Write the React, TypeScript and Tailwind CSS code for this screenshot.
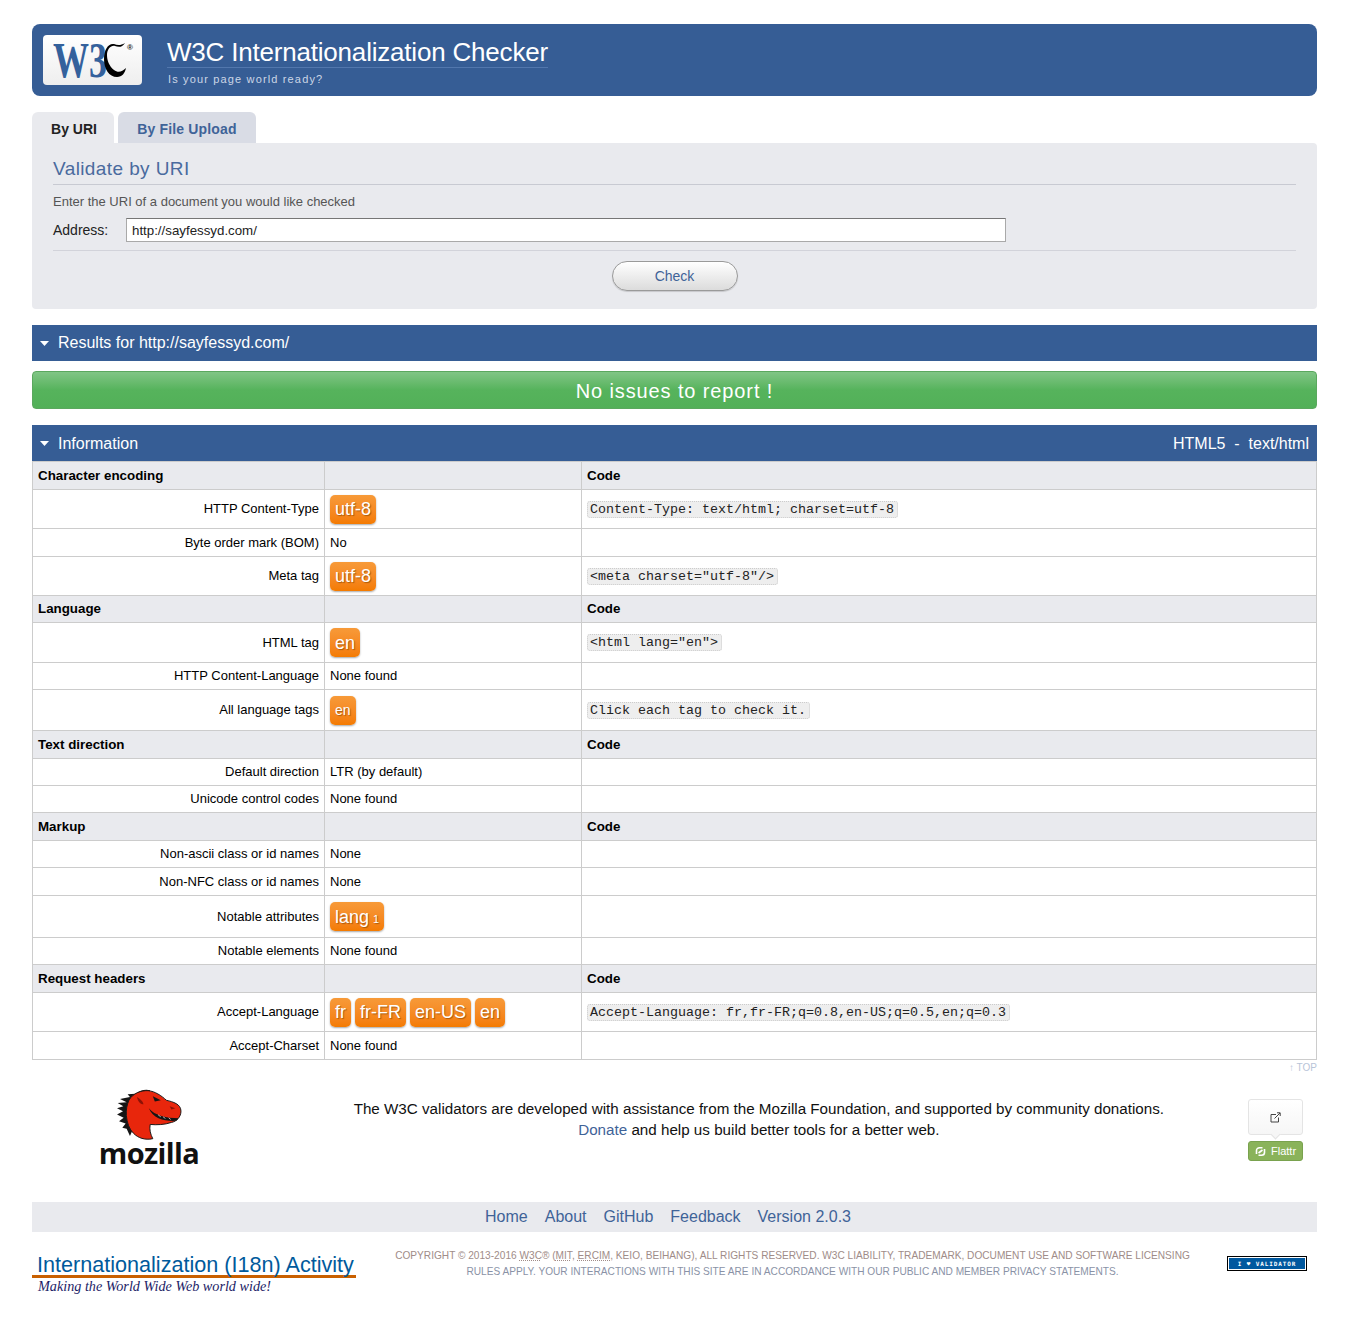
import React from "react";

const Caret = () => (
  <svg width="9" height="5" viewBox="0 0 9 5" className="mr-[9px] shrink-0"><polygon points="0,0 9,0 4.5,5" fill="#fff" /></svg>
);

const Pill = ({ children, size = "lg" }: { children: React.ReactNode; size?: "lg" | "sm" }) => (
  <span
    className={
      "inline-flex items-center justify-center rounded-[5px] bg-gradient-to-b from-[#f79a38] to-[#f47b00] pt-px text-white shadow-[0_1px_2px_rgba(0,0,0,0.35)] [text-shadow:1px_1px_1px_rgba(120,60,0,0.6)] " +
      (size === "lg" ? "h-[29px] px-[5px] text-[18px]" : "h-[29px] px-[5px] text-[14px]")
    }
  >
    {children}
  </span>
);

const Code = ({ children }: { children: React.ReactNode }) => (
  <code className="block h-[17px] w-fit rounded-[3px] border border-dotted border-[#ccc] bg-[#eeeeee] pl-[2px] pr-[3px] font-['Liberation_Mono',monospace] text-[13.33px] leading-[15px] text-[#222]">
    {children}
  </code>
);

type Row = { h: number; label: string; value?: React.ReactNode; code?: React.ReactNode; head?: boolean };

const rows: Row[] = [
  { h: 28, label: "Character encoding", head: true },
  { h: 39, label: "HTTP Content-Type", value: <Pill>utf-8</Pill>, code: <Code>Content-Type: text/html; charset=utf-8</Code> },
  { h: 28, label: "Byte order mark (BOM)", value: "No" },
  { h: 39, label: "Meta tag", value: <Pill>utf-8</Pill>, code: <Code>{'<meta charset="utf-8"/>'}</Code> },
  { h: 27, label: "Language", head: true },
  { h: 40, label: "HTML tag", value: <Pill>en</Pill>, code: <Code>{'<html lang="en">'}</Code> },
  { h: 27, label: "HTTP Content-Language", value: "None found" },
  { h: 41, label: "All language tags", value: <Pill size="sm">en</Pill>, code: <Code>Click each tag to check it.</Code> },
  { h: 28, label: "Text direction", head: true },
  { h: 27, label: "Default direction", value: "LTR (by default)" },
  { h: 27, label: "Unicode control codes", value: "None found" },
  { h: 28, label: "Markup", head: true },
  { h: 27, label: "Non-ascii class or id names", value: "None" },
  { h: 28, label: "Non-NFC class or id names", value: "None" },
  {
    h: 42,
    label: "Notable attributes",
    value: (
      <Pill>
        lang<span className="ml-[4px] mt-[4px] text-[11px]">1</span>
      </Pill>
    ),
  },
  { h: 27, label: "Notable elements", value: "None found" },
  { h: 28, label: "Request headers", head: true },
  {
    h: 39,
    label: "Accept-Language",
    value: (
      <>
        <Pill>fr</Pill>
        <Pill>fr-FR</Pill>
        <Pill>en-US</Pill>
        <Pill>en</Pill>
      </>
    ),
    code: <Code>Accept-Language: fr,fr-FR;q=0.8,en-US;q=0.5,en;q=0.3</Code>,
  },
  { h: 28, label: "Accept-Charset", value: "None found" },
];

const W3CLogo = () => (
  <svg width="84" height="44" viewBox="0 0 84 44" aria-label="W3C" className="overflow-visible">
    <text x="2" y="39" fontFamily="'Liberation Serif', serif" fontWeight="700" fontSize="50" fill="#34619c" textLength="54" lengthAdjust="spacingAndGlyphs">W3</text>
    <path d="M74 5 C69 8 66 7 63 6 C57 5 53 12 53 21 C53 31 58 39 66 39 C71 39 74 35 75 30 C71 34 67 35 63 32 C58 28 56 22 56 17 C56 11 60 7 64 8 C67 9 71 10 74 5 Z" fill="#000" />
    <text x="76" y="12" fontFamily="'Liberation Sans', sans-serif" fontSize="8" fontWeight="700" fill="#222">®</text>
  </svg>
);

const MozillaHead = () => (
  <svg width="68" height="53" viewBox="170 85 205 160" aria-hidden="true">
    <path d="M178 130 L205 128 L185 118 L215 112 L208 104 L232 102 C245 92 262 88 276 92 L215 230 L205 208 L192 205 L202 192 L182 185 L196 175 L176 165 L194 155 L176 146 L195 140 Z" fill="#151515" />
    <path d="M212 122 C224 100 250 92 270 93 C290 95 310 108 325 122 C345 127 369 133 369 155 C369 172 356 186 340 189 C320 196 295 197 276 195 C273 210 277 225 284 238 C260 243 240 236 226 222 C213 210 206 190 204 168 C203 150 206 135 212 122 Z" fill="#e8260c" stroke="#1a1a1a" strokeWidth="3" />
    <path d="M284 110 L308 122 L290 126 Z" fill="#151515" />
    <path d="M236 112 C246 118 254 124 256 134 C248 134 240 128 236 112 Z" fill="#8c1206" />
    <path d="M272 146 C290 168 325 176 362 176 L355 184 C320 186 285 178 272 146 Z" fill="#151515" />
    <path d="M300 166 L308 172 M315 172 L322 177 M332 175 L338 180" stroke="#fff" strokeWidth="2" />
    <path d="M335 140 L352 146 L340 150 Z" fill="#8c1206" />
  </svg>
);

const FlattrIcon = () => (
  <svg width="11" height="11" viewBox="0 0 11 11" fill="none" stroke="#fff" strokeWidth="1.6">
    <path d="M1.5 8 V4.5 C1.5 2.8 2.8 1.8 4.5 1.8 H7.5 M9.5 3 V6.5 C9.5 8.2 8.2 9.2 6.5 9.2 H3.5" />
    <path d="M3.5 7 L7.5 4" />
  </svg>
);

const ExternalIcon = () => (
  <svg width="11" height="11" viewBox="0 0 11 11" fill="none" stroke="#444" strokeWidth="1">
    <path d="M6 2.5 H1 V10 H8.5 V5.5" />
    <path d="M4.5 6.5 L10 1 M7 .8 H10.2 V4" />
  </svg>
);

export default function App() {
  return (
    <div className="min-h-[1327px] bg-white px-[32px] pt-[24px] font-['Liberation_Sans',Arial,sans-serif] text-[14px] text-black">
      <header className="flex h-[72px] rounded-[8px] bg-[#365d95]">
        <div className="ml-[11px] mt-[11px] flex h-[50px] w-[99px] items-center justify-center rounded-[4px] bg-gradient-to-b from-white to-[#eeeeee]">
          <W3CLogo />
        </div>
        <div className="ml-[25px] mt-[13px]">
          <h1 className="h-[31px] border-b border-[#5277ad] text-[26px] leading-[31px] tracking-[-0.2px] text-white">W3C Internationalization Checker</h1>
          <p className="mt-[5px] pl-px text-[11px] leading-[13px] tracking-[1.15px] text-[#ccd6e6]">Is your page world ready?</p>
        </div>
      </header>

      <nav className="mt-[16px] flex h-[31px] gap-[4px] text-[14px] font-bold leading-[34px]">
        <div className="w-[82px] rounded-t-[6px] bg-[#e9eaee] pl-[2px] text-center text-[#222]">By URI</div>
        <div className="w-[138px] rounded-t-[6px] bg-[#d9dce5] text-center tracking-[0.15px] text-[#3f6398]">By File Upload</div>
      </nav>

      <section className="h-[166px] rounded-b-[4px] rounded-tr-[4px] bg-[#e9eaee] px-[21px]">
        <h2 className="h-[42px] border-b border-[#c8cad2] pt-[13px] text-[19px] leading-[26px] tracking-[0.4px] text-[#4a6a9e]">Validate by URI</h2>
        <p className="mt-[8px] text-[13px] leading-[17px] text-[#555]">Enter the URI of a document you would like checked</p>
        <div className="mt-[8px] flex h-[24px] items-center">
          <label className="w-[73px] pt-px text-[14px] text-[#222]">Address:</label>
          <div className="flex h-[24px] w-[880px] items-center border border-[#a9a9a9] border-t-[#767676] bg-white px-[5px] pt-px text-[13.3px] text-[#222]">http://sayfessyd.com/</div>
        </div>
        <div className="mt-[8px] flex justify-center border-t border-[#d2d3da] pt-[10px]">
          <button className="h-[30px] w-[126px] rounded-full border border-[#9a9a9a] bg-gradient-to-b from-white to-[#dcdcdc] text-[14px] text-[#3f6398] shadow-[0_1px_1px_rgba(0,0,0,0.15)]">Check</button>
        </div>
      </section>

      <div className="mt-[16px] flex h-[36px] items-center bg-[#365d95] px-[8px] text-[16px] text-white">
        <Caret />
        Results for http://sayfessyd.com/
      </div>

      <div className="mt-[10px] flex h-[38px] items-center justify-center rounded-[4px] border border-[#5aa85e] bg-gradient-to-b from-[#80c585] via-[#56b35c] to-[#52b058] pt-px text-[20px] tracking-[0.88px] text-white">
        No issues to report !
      </div>

      <div className="mt-[16px] flex h-[36px] items-center bg-[#365d95] px-[8px] pt-px text-[16px] text-white">
        <Caret />
        <span>Information</span>
        <span className="ml-auto whitespace-pre">HTML5  -  text/html</span>
      </div>

      <table className="w-full table-fixed border-collapse border border-[#cccccc] text-[13px]">
        <colgroup>
          <col className="w-[292px]" />
          <col className="w-[257px]" />
          <col />
        </colgroup>
        <tbody>
          {rows.map((r) => (
            <tr key={r.label} style={{ height: r.h }} className={r.head ? "bg-[#e9eaee] text-[13.35px] font-bold" : ""}>
              <td className={"border border-[#cccccc] px-[5px] " + (r.head ? "pt-px text-left" : "text-right")}>{r.label}</td>
              <td className="border border-[#cccccc] px-[5px]">
                <div className="flex items-center gap-[4px]">{r.value}</div>
              </td>
              <td className={"border border-[#cccccc] px-[5px] " + (r.head ? "pt-px" : "")}>{r.head ? "Code" : r.code}</td>
            </tr>
          ))}
        </tbody>
      </table>

      <div className="mt-[2px] flex justify-end text-[10px] leading-[12px] text-[#b8c4d8]">↑ TOP</div>

      <section className="mt-[5px] flex h-[123px]">
        <div className="flex w-[322px] flex-col items-start pl-[57px] pt-[9px]">
          <div className="flex w-[120px] flex-col items-center">
            <MozillaHead />
            <span className="-mt-[3px] font-['Open_Sans',sans-serif] text-[29px] font-bold leading-[30px] tracking-[-0.6px] text-[#111]">mozilla</span>
          </div>
        </div>
        <div className="flex-1 whitespace-nowrap pt-[19px] text-center text-[15.2px] leading-[21px] text-[#111]">
          <p>The W3C validators are developed with assistance from the Mozilla Foundation, and supported by community donations.</p>
          <p>
            <span className="text-[#3f6398]">Donate</span> and help us build better tools for a better web.
          </p>
        </div>
        <div className="ml-[84px] mr-[14px] w-[55px] pt-[20px]">
          <div className="relative flex h-[36px] items-center justify-center rounded-[3px] border border-[#e4e4e4] bg-gradient-to-b from-white to-[#f6f6f6]">
            <ExternalIcon />
            <span className="absolute -bottom-[4px] left-[23px] h-[7px] w-[7px] rotate-45 border-b border-r border-[#e4e4e4] bg-[#f6f6f6]" />
          </div>
          <div className="mt-[6px] flex h-[20px] items-center justify-center gap-[5px] rounded-[3px] border border-[#79a24e] bg-[#8ab35a] text-[11px] text-white">
            <FlattrIcon />
            Flattr
          </div>
        </div>
      </section>

      <nav className="flex h-[30px] items-center justify-center gap-[17px] bg-[#e9eaee] pr-[13px] text-[16px] text-[#3f6398]">
        <span>Home</span>
        <span>About</span>
        <span>GitHub</span>
        <span>Feedback</span>
        <span>Version 2.0.3</span>
      </nav>

      <footer className="mt-[18px] flex items-start">
        <div className="w-[324px]">
          <div className="h-[28px] whitespace-nowrap border-b-[3px] border-[#c96000] pl-[5px] pt-[2px] text-[21.6px] leading-[25px] text-[#005a9c]">Internationalization (I18n) Activity</div>
          <div className="pl-[6px] font-['Liberation_Serif',serif] text-[14.2px] italic leading-[17px] text-[#1c1c66]">Making the World Wide Web world wide!</div>
        </div>
        <div className="-mt-[2px] ml-[19px] w-[835px] text-center text-[10.13px] uppercase leading-[16px]">
          <p className="whitespace-nowrap text-[#a08c88]">
            Copyright © 2013-2016 <span className="underline decoration-dotted">W3C</span>® (<span className="underline decoration-dotted">MIT</span>, <span className="underline decoration-dotted">ERCIM</span>, Keio, Beihang), All Rights Reserved. W3C liability, trademark, document use and software licensing
          </p>
          <p className="whitespace-nowrap text-[#8a92a6]">rules apply. Your interactions with this site are in accordance with our public and member privacy statements.</p>
        </div>
        <div className="ml-[17px] mt-[6px] h-[15px] w-[80px] border border-black bg-white p-px">
          <div className="flex h-full items-center justify-center bg-[#00589f] font-['DejaVu_Sans_Mono',monospace] text-[6px] font-bold leading-none tracking-[0.9px] text-white">
            I ♥ VALIDATOR
          </div>
        </div>
      </footer>
    </div>
  );
}
